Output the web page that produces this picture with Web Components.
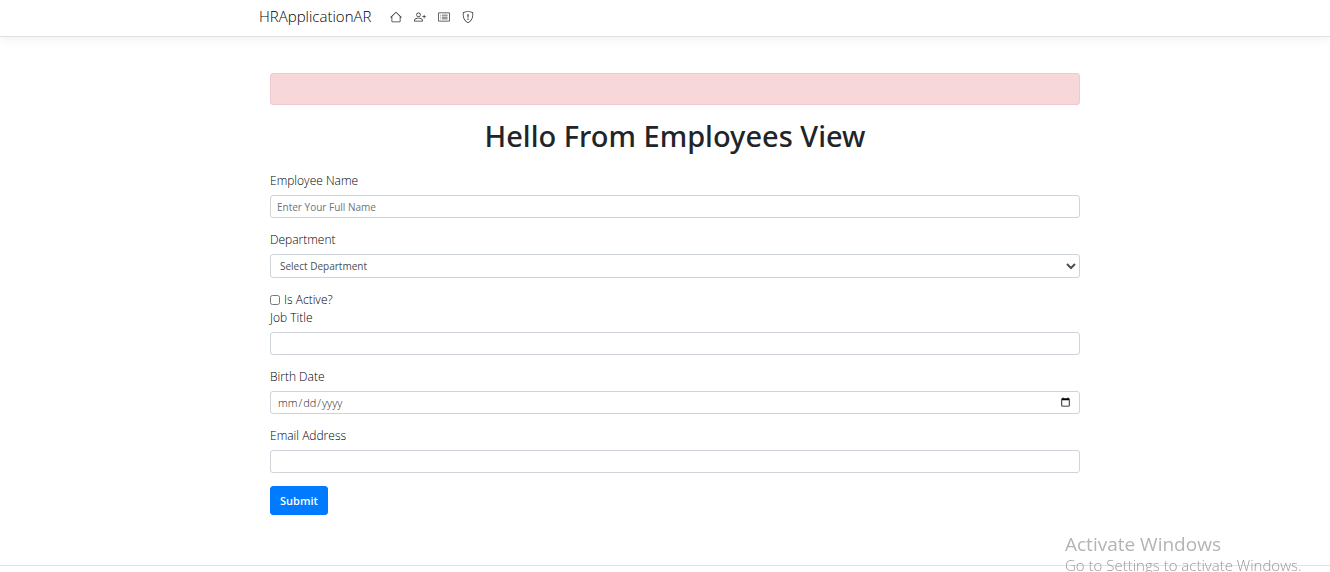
<!DOCTYPE html>
<html lang="en">
<head>
<meta charset="utf-8">
<title>HRApplicationAR</title>
<style>
  html, body { margin: 0; height: 100%; }
  body { background: #fff; color: #212529; font: 12px/18px "Open Sans", "Noto Sans", sans-serif; }
</style>
</head>
<body>
<hr-page></hr-page>
<script>
const define = (name, html, setup) => customElements.define(name, class extends HTMLElement {
  constructor() {
    super();
    const t = document.createElement('template');
    t.innerHTML = html;
    this.attachShadow({ mode: 'open' }).append(t.content.cloneNode(true));
  }
  connectedCallback() { if (setup) setup(this, this.shadowRoot); }
});

define('hr-navbar', `
<style>
  :host { display: block; background: #fff; border-bottom: 1px solid #dee2e6; box-shadow: 0 3px 9px rgba(0,0,0,.05); padding-left: 20px; }
  nav { box-sizing: border-box; max-width: 832px; height: 36px; margin: 0 auto; padding-bottom: 2px; display: flex; align-items: center; }
  a { color: #333; text-decoration: none; }
  .brand { font-size: 15px; font-weight: 300; line-height: 22px; margin-right: 19px; padding-bottom: 2px; color: #000; }
  ul { display: flex; gap: 12px; list-style: none; margin: 0; padding: 0; }
  li, li a, svg { display: block; width: 12px; height: 12px; }
  svg { fill: currentColor; }
</style>
<nav>
  <a class="brand" href="#">HRApplicationAR</a>
  <ul>
    <li><a href="#" aria-label="Home"><svg viewBox="0 0 16 16"><path d="M8.707 1.5a1 1 0 0 0-1.414 0L.646 8.146a.5.5 0 0 0 .708.708L2 8.207V13.5A1.500 1.500 0 0 0 3.500 15h9a1.500 1.500 0 0 0 1.500-1.500V8.207l.646.647a.5.5 0 0 0 .708-.708zM13 7.207V13.500a.5.5 0 0 1-.5.5h-9a.5.5 0 0 1-.5-.5V7.207l5-5z"/></svg></a></li>
    <li><a href="#" aria-label="Add employee"><svg viewBox="0 0 16 16"><path d="M6 8a3 3 0 1 0 0-6 3 3 0 0 0 0 6m2-3a2 2 0 1 1-4 0 2 2 0 0 1 4 0m4 8c0 1-1 1-1 1H1s-1 0-1-1 1-4 6-4 6 3 6 4m-1-.004c-.001-.246-.154-.986-.832-1.664C9.516 10.680 8.289 10 6 10s-3.516.680-4.168 1.332c-.678.678-.830 1.418-.832 1.664z"/><path d="M13.500 5a.5.5 0 0 1 .5.5V7h1.500a.5.5 0 0 1 0 1H14v1.500a.5.5 0 0 1-1 0V8h-1.500a.5.5 0 0 1 0-1H13V5.500a.5.5 0 0 1 .5-.5"/></svg></a></li>
    <li><a href="#" aria-label="Employee list"><svg viewBox="0 0 16 16"><path d="M14.500 3a.5.5 0 0 1 .5.5v9a.5.5 0 0 1-.5.5h-13a.5.5 0 0 1-.5-.5v-9a.5.5 0 0 1 .5-.5zm-13-1A1.500 1.500 0 0 0 0 3.500v9A1.500 1.500 0 0 0 1.500 14h13a1.500 1.500 0 0 0 1.500-1.500v-9A1.500 1.500 0 0 0 14.500 2z"/><path d="M5 8a.5.5 0 0 1 .5-.5h7a.5.5 0 0 1 0 1h-7A.5.5 0 0 1 5 8m0-2.500a.5.5 0 0 1 .5-.5h7a.5.5 0 0 1 0 1h-7a.5.5 0 0 1-.5-.5m0 5a.5.5 0 0 1 .5-.5h7a.5.5 0 0 1 0 1h-7a.5.5 0 0 1-.5-.5"/><circle cx="3.500" cy="5.500" r=".6"/><circle cx="3.500" cy="8" r=".6"/><circle cx="3.500" cy="10.500" r=".6"/></svg></a></li>
    <li><a href="#" aria-label="Privacy"><svg viewBox="0 0 16 16"><path d="M5.338 1.590a61 61 0 0 0-2.837.856.48.48 0 0 0-.328.390c-.554 4.157.726 7.190 2.253 9.188a10.700 10.700 0 0 0 2.287 2.233c.346.244.652.420.893.533q.180.085.293.118a1 1 0 0 0 .101.025 1 1 0 0 0 .1-.025q.114-.034.294-.118c.240-.113.547-.290.893-.533a10.700 10.700 0 0 0 2.287-2.233c1.527-1.997 2.807-5.031 2.253-9.188a.48.48 0 0 0-.328-.390c-.651-.213-1.750-.560-2.837-.855C9.552 1.290 8.531 1.067 8 1.067c-.530 0-1.552.223-2.662.524zM5.072.560C6.157.265 7.310 0 8 0s1.843.265 2.928.560c1.110.300 2.229.655 2.887.870a1.540 1.540 0 0 1 1.044 1.262c.596 4.477-.787 7.795-2.465 9.990a11.800 11.800 0 0 1-2.517 2.453 7 7 0 0 1-1.048.625c-.280.132-.581.240-.829.240s-.548-.108-.829-.240a7 7 0 0 1-1.048-.625 11.800 11.800 0 0 1-2.517-2.453C1.928 10.487.545 7.169 1.141 2.692A1.540 1.540 0 0 1 2.185 1.430 63 63 0 0 1 5.072.560"/><path d="M7.001 11a1 1 0 1 1 2 0 1 1 0 0 1-2 0M7.100 4.995a.905.905 0 1 1 1.800 0l-.350 3.507a.553.553 0 0 1-1.100 0z"/></svg></a></li>
  </ul>
</nav>`);

define('hr-alert', `
<style>
  :host { display: block; box-sizing: border-box; min-height: 32px; padding: 6px 15px; background: #f8d7da; border: 1px solid #f0c8cd; border-radius: 3px; color: #721c24; }
</style>
<div role="alert"><slot></slot></div>`);

const fieldStyle = `
  :host { display: block; margin-bottom: 13px; }
  label { display: block; margin-bottom: 5px; font-weight: 300; color: #000; }
  input, select { display: block; box-sizing: border-box; width: 100%; height: 23px; margin: 0; padding: 0 6px;
    font: 10px/16px "Open Sans", "Noto Sans", sans-serif; color: #495057; background: #fff;
    border: 1px solid #ced4da; border-radius: 3px; }
  input[type="date"] { font-size: 11px; font-weight: 300; color: #212529; }
  ::placeholder { color: #6c757d; opacity: 1; }`;

define('hr-field', `
<style>${fieldStyle}</style>
<label for="control"></label><input id="control">`, (el, root) => {
  const input = root.querySelector('input');
  root.querySelector('label').textContent = el.getAttribute('label');
  input.type = el.getAttribute('type') || 'text';
  input.placeholder = el.getAttribute('placeholder') || '';
});

define('hr-department', `
<style>${fieldStyle}
  select { height: 24px; padding: 0 5px; }
</style>
<label for="control">Department</label>
<select id="control"><option>Select Department</option></select>`);

define('hr-check', `
<style>
  :host { display: block; }
  label { display: flex; align-items: center; gap: 4px; font-weight: 300; color: #000; }
  input { width: 10px; height: 10px; margin: 0; }
</style>
<label><input type="checkbox"><slot></slot></label>`);

define('hr-submit', `
<style>
  :host { display: block; }
  button { height: 29px; padding: 0 9px; color: #fff; background: #007bff; border: 1px solid #007bff; border-radius: 3px; font: 600 11px/18px "Open Sans", "Noto Sans", sans-serif; }
</style>
<button type="submit"><slot></slot></button>`);

define('os-watermark', `
<style>
  :host { position: fixed; right: 0; bottom: 0; width: 265px; height: 40px; color: #b4b4b4; white-space: nowrap; pointer-events: none; }
  p { margin: 0; }
  .title { font-size: 19px; line-height: 24px; }
  .hint { font-size: 15px; font-weight: 300; line-height: 18px; color: #999; }
</style>
<p class="title">Activate Windows</p>
<p class="hint">Go to Settings to activate Windows.</p>`);

define('hr-page', `
<style>
  :host { display: flex; flex-direction: column; box-sizing: border-box; min-height: 100%; }
  main { flex: 1; padding: 36px 0 24px 20px; }
  .content { max-width: 810px; margin: 0 auto; }
  h1 { margin: 13px 0 18px; font-family: "Noto Sans", "Open Sans", sans-serif; font-size: 29px; line-height: 36px; font-weight: 500; text-align: center; }
  form { display: block; }
  footer { height: 6px; border-top: 1px solid #dee2e6; }
</style>
<hr-navbar></hr-navbar>
<main>
  <div class="content">
    <hr-alert></hr-alert>
    <h1>Hello From Employees View</h1>
    <form>
      <hr-field label="Employee Name" placeholder="Enter Your Full Name"></hr-field>
      <hr-department></hr-department>
      <hr-check>Is Active?</hr-check>
      <hr-field label="Job Title"></hr-field>
      <hr-field label="Birth Date" type="date"></hr-field>
      <hr-field label="Email Address" type="email"></hr-field>
      <hr-submit>Submit</hr-submit>
    </form>
  </div>
</main>
<footer></footer>
<os-watermark></os-watermark>`);
</script>
</body>
</html>
